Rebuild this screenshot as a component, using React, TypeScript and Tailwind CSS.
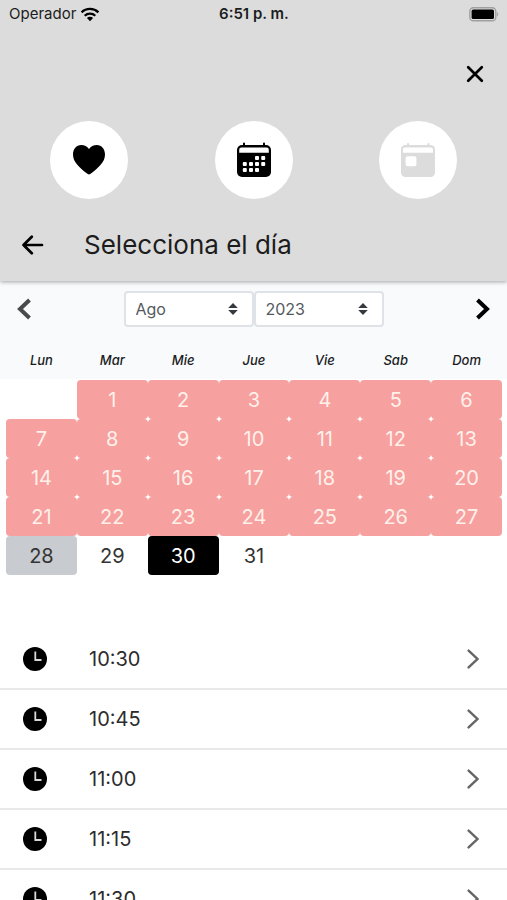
import { useState } from 'react';
import { clsx } from 'clsx';

const weekdays = ['Lun', 'Mar', 'Mie', 'Jue', 'Vie', 'Sab', 'Dom'];
const months = ['Ene', 'Feb', 'Mar', 'Abr', 'May', 'Jun', 'Jul', 'Ago', 'Sep', 'Oct', 'Nov', 'Dic'];
const years = ['2022', '2023', '2024'];
const times = ['10:30', '10:45', '11:00', '11:15', '11:30'];

// null is an empty cell before or after the month
const weeks: (number | null)[][] = [
  [null, 1, 2, 3, 4, 5, 6],
  [7, 8, 9, 10, 11, 12, 13],
  [14, 15, 16, 17, 18, 19, 20],
  [21, 22, 23, 24, 25, 26, 27],
  [28, 29, 30, 31, null, null, null],
];
const today = 28;

function StatusBar() {
  return (
    <div className="grid h-7 grid-cols-3 items-center pr-2 pl-[9px] text-[15px] text-[#1c1c1c]">
      <div className="flex items-center gap-1">
        <span>Operador</span>
        <svg width="20" height="15" viewBox="0 0 20 15" fill="none" stroke="#000" strokeWidth="2.3">
          <path d="M1.6 5.4a12 12 0 0 1 16.8 0" />
          <path d="M4.7 8.7a7.6 7.6 0 0 1 10.6 0" />
          <path d="M10 14.2 6.9 11a4.4 4.4 0 0 1 6.2 0Z" fill="#000" stroke="none" />
        </svg>
      </div>
      <span className="text-center font-semibold whitespace-nowrap">6:51 p. m.</span>
      <svg className="justify-self-end" width="30" height="15" viewBox="0 0 30 15">
        <rect x="0.8" y="0.8" width="26" height="13" rx="3.6" fill="none" stroke="#a0a0a0" strokeWidth="1.4" />
        <rect x="2.6" y="2.6" width="22.4" height="9.4" rx="1.6" fill="#000" />
        <path d="M28 5.2c1.6.6 1.6 3.6 0 4.2Z" fill="#a0a0a0" />
      </svg>
    </div>
  );
}

function HeartIcon() {
  return (
    <svg width="34" height="32" viewBox="0 0 34 32" fill="#000">
      <path d="M17 30.4c-.9 0-1.600-.5-2.300-1.100C7.500 23.200 1 18.200 1 10.400 1 4.800 4.400.9 9.200.9c3.300 0 6 1.500 7.800 4.100C18.800 2.400 21.500.9 24.800.9 29.600.9 33 4.800 33 10.400c0 7.800-6.500 12.800-13.700 18.900-.7.6-1.400 1.100-2.300 1.100Z" />
    </svg>
  );
}

function MonthIcon() {
  return (
    <svg width="36" height="36" viewBox="0 0 36 36">
      <path d="M8 4V1.600M28 4V1.600" stroke="#000" strokeWidth="2" strokeLinecap="round" />
      <rect x="1" y="3" width="34" height="32" rx="5" fill="#000" />
      <path d="M3.200 10.700V7.700a2.200 2.200 0 0 1 2.200-2.200h25.200a2.200 2.200 0 0 1 2.200 2.200v3Z" fill="#fff" />
      <g fill="#fff">
        <rect x="19" y="14" width="4" height="4" rx="1" />
        <rect x="25.200" y="14" width="4" height="4" rx="1" />
        <rect x="6.800" y="20" width="4" height="4" rx="1" />
        <rect x="13" y="20" width="4" height="4" rx="1" />
        <rect x="19" y="20" width="4" height="4" rx="1" />
        <rect x="25.200" y="20" width="4" height="4" rx="1" />
        <rect x="6.800" y="26" width="4" height="4" rx="1" />
        <rect x="13" y="26" width="4" height="4" rx="1" />
        <rect x="19" y="26" width="4" height="4" rx="1" />
      </g>
    </svg>
  );
}

function DayIcon() {
  return (
    <svg width="36" height="36" viewBox="0 0 36 36">
      <path d="M8.500 4 8 1.900M28 4l.5-2.100" stroke="#dcdcdc" strokeWidth="2" strokeLinecap="round" />
      <rect x="1" y="3" width="34" height="32" rx="4.500" fill="#dcdcdc" />
      <path d="M3 10.700V7.200a1.800 1.800 0 0 1 1.800-1.800h26.400A1.800 1.800 0 0 1 33 7.200v3.500Z" fill="#fff" />
      <rect x="5.600" y="14.200" width="10.800" height="10" rx="2" fill="#fff" />
    </svg>
  );
}

function Header() {
  const steps = [
    { label: 'Servicio', icon: <HeartIcon /> },
    { label: 'Calendario', icon: <MonthIcon /> },
    { label: 'Cita', icon: <DayIcon /> },
  ];

  return (
    <header className="relative bg-[#dcdcdc] pb-4 shadow-[0_1px_4px_rgba(0,0,0,0.35)]">
      <StatusBar />
      <div className="flex justify-end px-5 pt-8">
        <button type="button" aria-label="Cerrar" className="flex h-7 w-6 items-center justify-center">
          <svg width="18" height="18" viewBox="0 0 18 18" stroke="#000" strokeWidth="2.700" strokeLinecap="round">
            <path d="m2.200 2.200 13.600 13.600M15.800 2.200 2.200 15.800" />
          </svg>
        </button>
      </div>
      <div className="flex justify-between px-[50px] pt-[33px]">
        {steps.map(({ label, icon }) => (
          <button
            key={label}
            type="button"
            aria-label={label}
            className="flex size-[78px] items-center justify-center rounded-full bg-white"
          >
            {icon}
          </button>
        ))}
      </div>
      <div className="flex items-center gap-10 px-[21px] pt-[26px]">
        <button type="button" aria-label="Volver">
          <svg width="23" height="20" viewBox="0 0 23 20" fill="none" stroke="#000" strokeWidth="2.700" strokeLinecap="round" strokeLinejoin="round">
            <path d="M21 10H2.500M10.800 1.700 2.500 10l8.300 8.300" />
          </svg>
        </button>
        <h1 className="text-[26px] leading-10 text-[#1c1c1c]">Selecciona el día</h1>
      </div>
    </header>
  );
}

interface PickerProps {
  label: string;
  value: string;
  options: string[];
  onChange: (value: string) => void;
}

function Picker({ label, value, options, onChange }: PickerProps) {
  return (
    <label className="grid w-[130px] items-center">
      <select
        aria-label={label}
        value={value}
        onChange={(e) => onChange(e.target.value)}
        className="col-start-1 row-start-1 h-9 w-full appearance-none rounded border-2 border-[#dfe2e6] bg-white pl-[10px] text-base text-[#55595d]"
      >
        {options.map((option) => (
          <option key={option}>{option}</option>
        ))}
      </select>
      <svg className="pointer-events-none col-start-1 row-start-1 mr-4 justify-self-end" width="10" height="12" viewBox="0 0 10 12" fill="#343a40">
        <path d="M5 0 9.800 5H.2ZM5 12 .2 7h9.600Z" />
      </svg>
    </label>
  );
}

function Calendar() {
  const [month, setMonth] = useState('Ago');
  const [year, setYear] = useState('2023');
  const [selected, setSelected] = useState(30);

  return (
    <section>
      <div className="flex items-start justify-between bg-[#f8fafc] px-4 pt-[10px] pb-4">
        <button type="button" aria-label="Mes anterior" className="flex h-9 w-4 items-center">
          <svg width="16" height="22" viewBox="0 0 16 22" fill="none" stroke="#4a4a4a" strokeWidth="4">
            <path d="M13.500 2 4 11l9.500 9" />
          </svg>
        </button>
        <div className="flex">
          <Picker label="Mes" value={month} options={months} onChange={setMonth} />
          <Picker label="Año" value={year} options={years} onChange={setYear} />
        </div>
        <button type="button" aria-label="Mes siguiente" className="flex h-9 w-4 items-center">
          <svg width="16" height="22" viewBox="0 0 16 22" fill="none" stroke="#000" strokeWidth="4">
            <path d="m2.500 2 9.500 9-9.500 9" />
          </svg>
        </button>
      </div>
      <table className="block">
        <thead className="block bg-[#f8fafc] pr-[5px] pl-[6px]">
          <tr className="grid h-9 grid-cols-7 items-center">
            {weekdays.map((day) => (
              <th key={day} scope="col" className="text-[13px] font-medium text-[#1c1c1c] italic">
                {day}
              </th>
            ))}
          </tr>
        </thead>
        <tbody className="block pt-px pr-[5px] pl-[6px]">
          {weeks.map((week, i) => (
            <tr key={i} className="grid grid-cols-7">
              {week.map((day, j) => (
                <td key={j}>
                  {day !== null && (
                    <button
                      type="button"
                      disabled={day < today}
                      onClick={() => setSelected(day)}
                      className={clsx(
                        'h-[39px] w-full rounded text-xl',
                        day < today && 'bg-[#f6a0a0] text-[#fff1ea]',
                        day >= today && day !== selected && 'text-[#343434]',
                        day === today && day !== selected && 'bg-[#c8cbcf]',
                        day === selected && 'bg-black text-white',
                      )}
                    >
                      {day}
                    </button>
                  )}
                </td>
              ))}
            </tr>
          ))}
        </tbody>
      </table>
    </section>
  );
}

function TimeList() {
  return (
    <ul className="mt-[55px]">
      {times.map((time) => (
        <li key={time} className="border-b-2 border-[#e9e9e9]">
          <button type="button" className="flex h-[58px] w-full items-center pr-7 pl-[23px] text-left">
            <svg width="24" height="24" viewBox="0 0 24 24">
              <circle cx="12" cy="12" r="12" fill="#000" />
              <path d="M12.300 4.500V13h6.200" fill="none" stroke="#d8d8d8" strokeWidth="1.800" />
            </svg>
            <span className="ml-[42px] flex-1 text-xl text-[#2c2c2c]">{time}</span>
            <svg width="12" height="20" viewBox="0 0 12 20" fill="none" stroke="#666" strokeWidth="2.400" strokeLinecap="round">
              <path d="m1.600 1.600 8.800 8.400-8.800 8.400" />
            </svg>
          </button>
        </li>
      ))}
    </ul>
  );
}

export default function App() {
  return (
    <main className="h-screen overflow-hidden bg-white font-['Inter',sans-serif]">
      <Header />
      <Calendar />
      <TimeList />
    </main>
  );
}
